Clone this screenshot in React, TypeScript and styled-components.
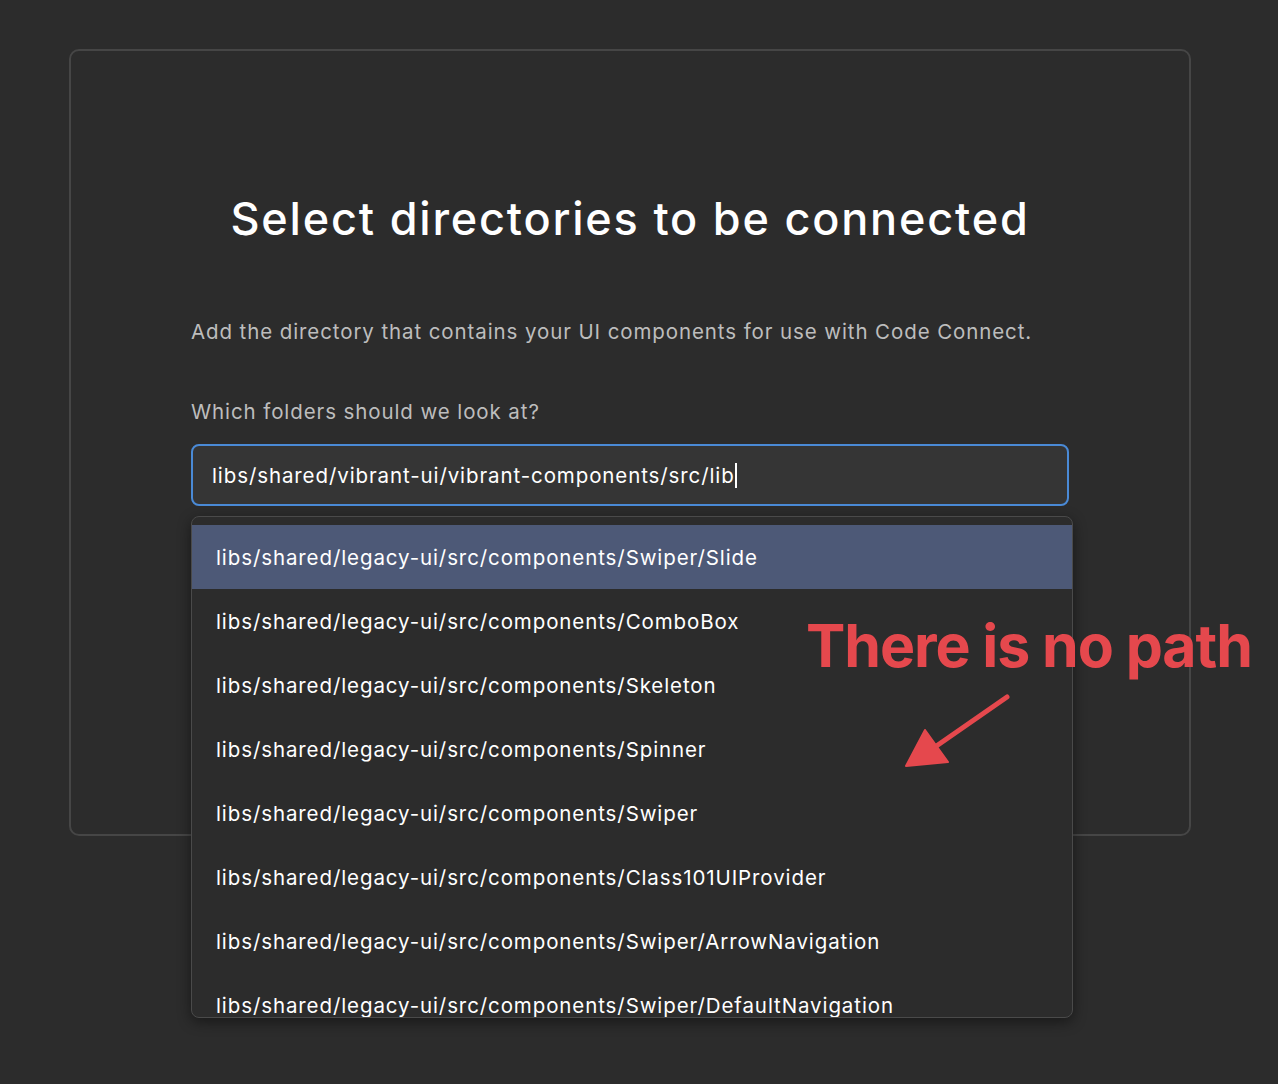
import React from "react";
import styled, { createGlobalStyle } from "styled-components";

const Global = createGlobalStyle`
  html, body { margin: 0; padding: 0; background: #2c2c2c; }
  body { font-family: Inter, "Noto Sans", sans-serif; -webkit-font-smoothing: antialiased; }
`;

const Page = styled.div`
  position: relative;
  width: 1278px;
  height: 1084px;
  box-sizing: border-box;
  padding: 49px 0 0 69px;
  overflow: hidden;
  background: #2c2c2c;
`;

const Card = styled.div`
  width: 1122px;
  height: 787px;
  box-sizing: border-box;
  border: 2px solid #464646;
  border-radius: 10px;
  background: #2c2c2c;
  display: flex;
  flex-direction: column;
  align-items: center;
  padding-top: 140px;
`;

const Title = styled.h1`
  margin: 0;
  font-size: 45px;
  line-height: 56px;
  font-weight: 500;
  color: #ffffff;
  letter-spacing: 1.8px;
`;

const Body = styled.div`
  width: 878px;
  margin-top: 71px;
  display: flex;
  flex-direction: column;
`;

const Description = styled.p`
  margin: 0;
  font-size: 20.5px;
  line-height: 28px;
  letter-spacing: 0.9px;
  color: #bdbdbd;
`;

const Label = styled.label`
  margin-top: 52px;
  font-size: 20.5px;
  line-height: 28px;
  letter-spacing: 0.9px;
  color: #bdbdbd;
`;

const Field = styled.div`
  position: relative;
  margin-top: 18px;
`;

const Input = styled.div`
  height: 62px;
  box-sizing: border-box;
  border: 2px solid #4a8ad6;
  border-radius: 8px;
  background: #353535;
  display: flex;
  align-items: center;
  padding-left: 19px;
  font-size: 20.5px;
  letter-spacing: 0.9px;
  color: #ffffff;
`;

const Caret = styled.span`
  display: inline-block;
  width: 2px;
  height: 25px;
  background: #ffffff;
`;

const Menu = styled.ul`
  position: absolute;
  top: 72px;
  left: 0;
  width: 882px;
  height: 502px;
  margin: 0;
  padding: 8px 0 0;
  box-sizing: border-box;
  list-style: none;
  background: #2c2c2c;
  border: 1.5px solid #4a4a4a;
  border-radius: 8px;
  box-shadow: 0 4px 14px rgba(0, 0, 0, 0.45);
  overflow: hidden;
`;

const Item = styled.li<{ $active?: boolean }>`
  height: 64px;
  display: flex;
  align-items: center;
  padding-left: 24px;
  font-size: 20.5px;
  letter-spacing: 0.9px;
  color: #ffffff;
  background: ${(p) => (p.$active ? "#4d5977" : "transparent")};
  white-space: nowrap;
`;

const Annotation = styled.div`
  position: absolute;
  left: 806px;
  top: 610px;
  font-size: 59px;
  line-height: 72px;
  font-weight: 700;
  color: #e5484d;
  letter-spacing: -1.1px;
  white-space: nowrap;
`;

const Arrow = styled.svg`
  position: absolute;
  left: 890px;
  top: 680px;
`;

const items = [
  "libs/shared/legacy-ui/src/components/Swiper/Slide",
  "libs/shared/legacy-ui/src/components/ComboBox",
  "libs/shared/legacy-ui/src/components/Skeleton",
  "libs/shared/legacy-ui/src/components/Spinner",
  "libs/shared/legacy-ui/src/components/Swiper",
  "libs/shared/legacy-ui/src/components/Class101UIProvider",
  "libs/shared/legacy-ui/src/components/Swiper/ArrowNavigation",
  "libs/shared/legacy-ui/src/components/Swiper/DefaultNavigation",
];

export default function App() {
  return (
    <Page>
      <Global />
      <Card>
        <Title>Select directories to be connected</Title>
        <Body>
          <Description>
            Add the directory that contains your UI components for use with Code Connect.
          </Description>
          <Label>Which folders should we look at?</Label>
          <Field>
            <Input>
              libs/shared/vibrant-ui/vibrant-components/src/lib
              <Caret />
            </Input>
            <Menu>
              {items.map((t, i) => (
                <Item key={t} $active={i === 0}>
                  {t}
                </Item>
              ))}
            </Menu>
          </Field>
        </Body>
      </Card>
      <Annotation>There is no path</Annotation>
      <Arrow width="130" height="100" viewBox="0 0 130 100">
        <line x1="117" y1="17" x2="32" y2="76" stroke="#e5484d" strokeWidth="5" strokeLinecap="round" />
        <polygon points="16,86 35,50 58,82" fill="#e5484d" stroke="#e5484d" strokeWidth="2" strokeLinejoin="round" />
      </Arrow>
    </Page>
  );
}
